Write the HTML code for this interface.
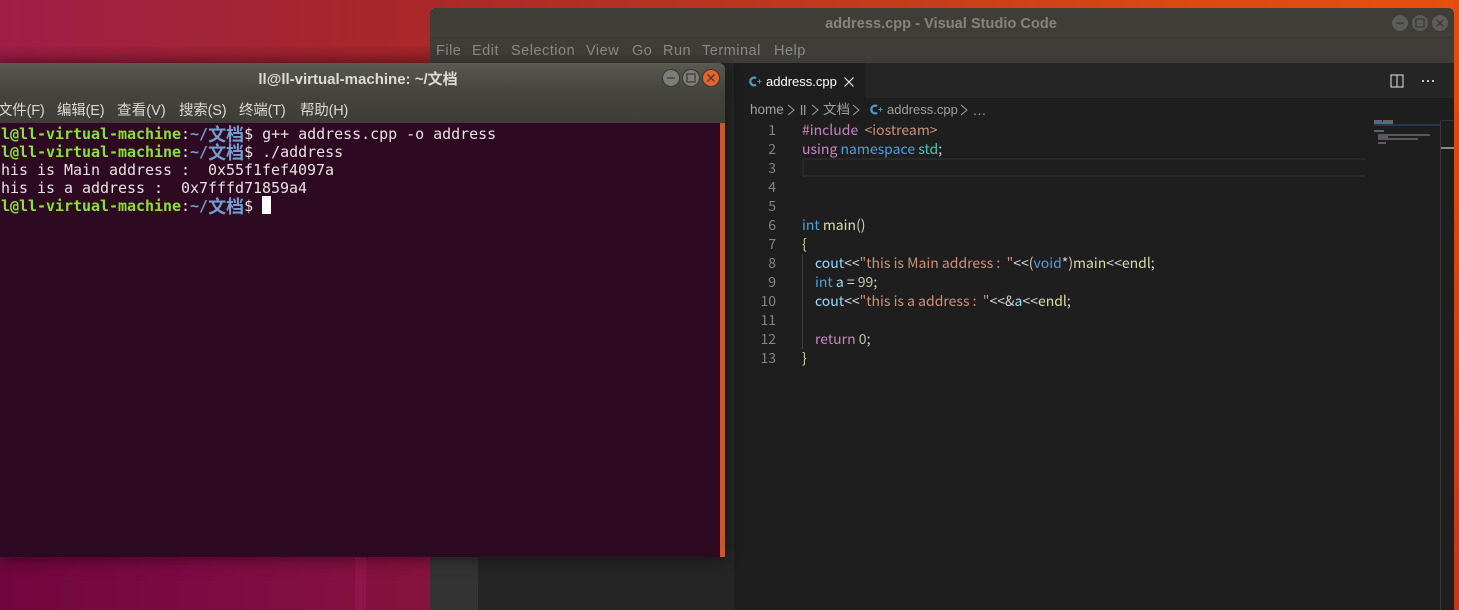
<!DOCTYPE html>
<html><head><meta charset="utf-8">
<style>
html,body{margin:0;padding:0;width:1459px;height:610px;overflow:hidden;background:#7a0a43}
body{position:relative}
div,span{position:absolute;white-space:pre}
i{font-style:normal}
#bg{left:0;top:0;width:1459px;height:120px;background:linear-gradient(90deg,#a01d48 0,#a22438 200px,#aa2829 430px,#c23a1c 850px,#dc4a12 1200px,#e64f10 1459px)}
#bg2{left:0;top:550px;width:430px;height:60px;background:linear-gradient(90deg,#70063f 0,#7b0a44 170px,#87133d 430px)}
#edge{left:1454px;top:0;width:5px;height:610px;background:linear-gradient(180deg,#e44d0f 0,#d8480f 200px,#c03a22 560px)}
#vs{left:430px;top:8px;width:1024px;height:602px;background:#252525;border-radius:6px 6px 0 0;overflow:hidden}
.ui{font-family:"Liberation Sans","Noto Sans CJK SC",sans-serif}
.code{font-family:"Noto Sans CJK SC","Liberation Sans",sans-serif;font-size:14px;line-height:19px;height:19px}
.ln{font-family:"Noto Sans CJK SC","Liberation Sans",sans-serif;font-size:14px;line-height:19px;height:19px;width:36px;left:740px;text-align:right;color:#858585}
.term{font-family:"DejaVu Sans Mono",monospace;font-size:15px;line-height:18px;height:18px;color:#e6e3e0;letter-spacing:-.03px}
.term b{display:inline-block;vertical-align:top;width:36px;height:18px;overflow:visible;font-family:"Noto Sans CJK SC",sans-serif;font-size:18px;font-weight:bold;letter-spacing:0;color:#729fcf;line-height:18px}
.g{color:#8ae234;font-weight:bold}.b{color:#729fcf;font-weight:bold}
.p{color:#c586c0}.o{color:#ce9178}.bl{color:#569cd6}.c{color:#9cdcfe}.y{color:#dcdcaa}.t{color:#4ec9b0}.n{color:#b5cea8}.w{color:#d4d4d4}.br{color:#d8cfa2}
.m{top:42px;font-size:14.500px;line-height:18px;color:#8b8b84;letter-spacing:.5px}
.tm{top:102px;font-size:14.500px;line-height:18px;color:#dad8d2;letter-spacing:-.2px}
.cb{border-radius:50%;width:16px;height:16px}
.bc{top:101px;font-size:14px;line-height:18px;color:#a0a0a0}
</style></head><body>
<div id="bg"></div><div id="bg2"></div><div id="edge"></div>
<div style="left:355px;top:557px;width:11px;height:53px;background:#8e1545"></div>
<div style="left:0;top:45px;width:430px;height:18px;background:linear-gradient(180deg,rgba(60,0,20,0),rgba(60,0,20,.28))"></div>

<!-- VS Code window -->
<div id="vs">
  <div style="left:0;top:0;width:1024px;height:55px;background:#3e3d38"></div>
  <div style="left:0;top:29px;width:1024px;height:1px;background:#3a3934"></div>
  <div style="left:0;top:55px;width:48px;height:547px;background:#333"></div>
  <div style="left:48px;top:55px;width:256px;height:547px;background:#252525"></div>
  <div style="left:304px;top:55px;width:720px;height:547px;background:#1e1e1e"></div>
  <div style="left:304px;top:55px;width:720px;height:35px;background:#252526"></div>
</div>
<div class="ui" style="left:429px;top:15px;width:1024px;text-align:center;font-size:14.500px;line-height:18px;font-weight:bold;color:#85847e;letter-spacing:.05px">address.cpp - Visual Studio Code</div>
<div class="ui m" style="left:436px">File</div>
<div class="ui m" style="left:472px">Edit</div>
<div class="ui m" style="left:511px">Selection</div>
<div class="ui m" style="left:586px">View</div>
<div class="ui m" style="left:632px">Go</div>
<div class="ui m" style="left:663px">Run</div>
<div class="ui m" style="left:702px">Terminal</div>
<div class="ui m" style="left:774px">Help</div>

<div class="cb" style="left:1392px;top:15px;background:#5c5c58"></div>
<div class="cb" style="left:1412px;top:15px;background:#5c5c58"></div>
<div class="cb" style="left:1432px;top:15px;background:#5c5c58"></div>
<svg style="position:absolute;left:1390px;top:13px" width="60" height="20" fill="none" stroke="#3b3b38" stroke-width="1.400">
<path d="M6 10h8"/><rect x="26" y="6" width="8" height="8"/><path d="M46.500 6.500l7 7M53.500 6.500l-7 7"/></svg>

<!-- Tab -->
<div style="left:734px;top:63px;width:131px;height:35px;background:#1e1e1e"></div>
<div style="left:734px;top:63px;width:1px;height:35px;background:#1a1a1a"></div>
<svg style="position:absolute;left:748px;top:74px" width="15" height="15" fill="none" stroke="#519aba" stroke-width="2.200"><path d="M8 4.200A3.800 3.800 0 1 0 8 10.800"/><path d="M9.500 7.500h4M11.500 5.500v4" stroke-width="1"/></svg>
<div class="ui" style="left:766px;top:73px;font-size:13px;line-height:18px;color:#fff">address.cpp</div>
<svg style="position:absolute;left:843px;top:76px" width="12" height="12" fill="none" stroke="#e8e8e8" stroke-width="1.200"><path d="M1.500 1.500l9 9M10.500 1.500l-9 9"/></svg>

<svg style="position:absolute;left:1390px;top:74px" width="14" height="14" fill="none" stroke="#c8c8c8" stroke-width="1.200"><rect x="1" y="1" width="12" height="12"/><path d="M7 1v12"/></svg>
<div style="left:1422px;top:80px;width:2px;height:2px;background:#c5c5c5;box-shadow:5px 0 #c5c5c5,10px 0 #c5c5c5"></div>

<!-- Breadcrumb -->
<div class="ui bc" style="left:750px;font-size:13.500px">home</div>
<svg style="position:absolute;left:786px;top:104px" width="185" height="12" fill="none" stroke="#a0a0a0" stroke-width="1"><path d="M2 1l6 5-6 5M26 1l6 5-6 5M67 1l6 5-6 5M175 1l6 5-6 5"/></svg>
<div class="ui bc" style="left:800px">ll</div>
<div class="ui bc" style="left:823px;font-size:13.500px">文档</div>
<svg style="position:absolute;left:869px;top:102px" width="15" height="15" fill="none" stroke="#519aba" stroke-width="2.200"><path d="M8 4.200A3.800 3.800 0 1 0 8 10.800"/><path d="M9.500 7.500h4M11.500 5.500v4" stroke-width="1"/></svg>
<div class="ui bc" style="left:887px;font-size:13px">address.cpp</div>
<div class="ui bc" style="left:973px;letter-spacing:.6px">...</div>

<!-- Current line -->
<div style="left:802px;top:158px;width:563px;height:15px;border:2px solid #282828;border-right:0;box-sizing:content-box;margin-right:0;clip-path:inset(0 2px 0 0)"></div>
<div style="left:802px;top:254px;width:1px;height:95px;background:#404040"></div>

<!-- Line numbers -->
<div class="ln" style="top:121px">1</div>
<div class="ln" style="top:140px">2</div>
<div class="ln" style="top:159px">3</div>
<div class="ln" style="top:178px">4</div>
<div class="ln" style="top:197px">5</div>
<div class="ln" style="top:216px">6</div>
<div class="ln" style="top:235px">7</div>
<div class="ln" style="top:254px">8</div>
<div class="ln" style="top:273px">9</div>
<div class="ln" style="top:292px">10</div>
<div class="ln" style="top:311px">11</div>
<div class="ln" style="top:330px">12</div>
<div class="ln" style="top:349px">13</div>

<!-- Code -->
<div class="code" style="left:802px;top:121px"><i class="p">#include</i>  <i class="o">&lt;iostream&gt;</i></div>
<div class="code" style="left:802px;top:140px"><i class="p">using</i> <i class="bl">namespace</i> <i class="t">std</i><i class="w">;</i></div>
<div class="code" style="left:802px;top:216px"><i class="bl">int</i> <i class="y">main</i><i class="w">()</i></div>
<div class="code" style="left:802px;top:235px"><i class="br">{</i></div>
<div class="code" style="left:815px;top:254px"><i class="c">cout</i><i class="w">&lt;&lt;</i><i class="o">"this is Main address :  "</i><i class="w">&lt;&lt;</i><i class="br">(</i><i class="bl">void</i><i class="w">*</i><i class="br">)</i><i class="y">main</i><i class="w">&lt;&lt;</i><i class="y">endl</i><i class="w">;</i></div>
<div class="code" style="left:815px;top:273px"><i class="bl">int</i> <i class="c">a</i> <i class="w">=</i> <i class="n">99</i><i class="w">;</i></div>
<div class="code" style="left:815px;top:292px"><i class="c">cout</i><i class="w">&lt;&lt;</i><i class="o">"this is a address :  "</i><i class="w">&lt;&lt;&amp;</i><i class="c">a</i><i class="w">&lt;&lt;</i><i class="y">endl</i><i class="w">;</i></div>
<div class="code" style="left:815px;top:330px"><i class="p">return</i> <i class="n">0</i><i class="w">;</i></div>
<div class="code" style="left:802px;top:349px"><i class="br">}</i></div>

<!-- Minimap -->
<div style="left:1374px;top:120px;width:8px;height:2px;background:#7a5a7a"></div>
<div style="left:1383px;top:120px;width:10px;height:2px;background:#7a5f55"></div>
<div style="left:1374px;top:122px;width:19px;height:2px;background:#4a6f7f"></div>
<div style="left:1374px;top:124px;width:66px;height:2px;background:#1f3a52"></div>
<div style="left:1374px;top:130px;width:10px;height:2px;background:#55636c"></div>
<div style="left:1378px;top:134px;width:52px;height:2px;background:#5e5650"></div>
<div style="left:1378px;top:136px;width:10px;height:2px;background:#50606a"></div>
<div style="left:1378px;top:138px;width:40px;height:2px;background:#5e5650"></div>
<div style="left:1378px;top:142px;width:8px;height:2px;background:#66566a"></div>
<div style="left:1440px;top:120px;width:1px;height:490px;background:#3a3a3a"></div>
<div style="left:1440px;top:120px;width:14px;height:1px;background:#333"></div>
<div style="left:1441px;top:147px;width:13px;height:2px;background:#8a8a8a"></div>

<!-- Terminal window -->
<div style="left:0;top:63px;width:725px;height:494px;background:#2d0922;border-radius:0 6px 0 0;box-shadow:0 2px 16px rgba(0,0,0,.45);overflow:hidden">
  <div style="left:0;top:0;width:725px;height:60px;background:linear-gradient(180deg,#5b5a51 0,#45443e 28px,#3e3d38 60px)"></div>
  <div style="right:0;top:60px;width:5px;height:434px;background:#c75a2c"></div>
</div>
<div class="ui" style="left:0;top:70px;width:716px;text-align:center;font-size:15px;line-height:20px;font-weight:bold;color:#dfdbd2">ll@ll-virtual-machine: ~/文档</div>
<div class="ui tm" style="left:-2px">文件(F)</div>
<div class="ui tm" style="left:57px">编辑(E)</div>
<div class="ui tm" style="left:117px;letter-spacing:.1px">查看(V)</div>
<div class="ui tm" style="left:179px">搜索(S)</div>
<div class="ui tm" style="left:239px">终端(T)</div>
<div class="ui tm" style="left:300px">帮助(H)</div>

<div class="cb" style="left:663px;top:70px;background:#7d7d79;box-shadow:0 0 0 1px #383834"></div>
<div class="cb" style="left:683px;top:70px;background:#7d7d79;box-shadow:0 0 0 1px #383834"></div>
<div class="cb" style="left:703px;top:70px;background:#e9622c;box-shadow:0 0 0 1px #383834"></div>
<svg style="position:absolute;left:660px;top:68px" width="60" height="20" fill="none" stroke="#3e3d38" stroke-width="1.300">
<path d="M7 10h8"/><rect x="27" y="6" width="8" height="8"/><path d="M47.500 6.500l7 7M54.500 6.500l-7 7"/></svg>

<div class="term" style="left:-8px;top:125px"><i class="g">ll@ll-virtual-machine</i>:<i class="b">~/</i><b>文档</b>$ g++ address.cpp -o address</div>
<div class="term" style="left:-8px;top:143px"><i class="g">ll@ll-virtual-machine</i>:<i class="b">~/</i><b>文档</b>$ ./address</div>
<div class="term" style="left:-8px;top:161px">this is Main address :  0x55f1fef4097a</div>
<div class="term" style="left:-8px;top:179px">this is a address :  0x7fffd71859a4</div>
<div class="term" style="left:-8px;top:197px"><i class="g">ll@ll-virtual-machine</i>:<i class="b">~/</i><b>文档</b>$ </div>
<div style="left:262px;top:196px;width:9px;height:18px;background:#fff"></div>
</body></html>
